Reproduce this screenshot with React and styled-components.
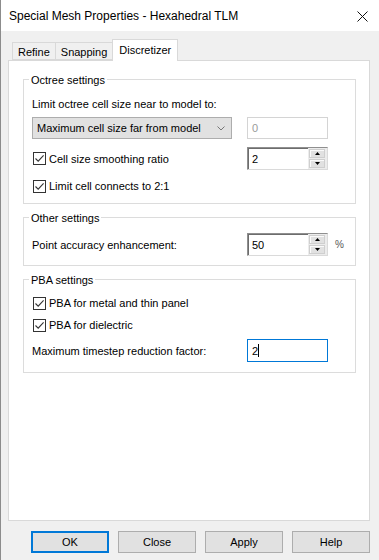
import React from 'react'
import styled, { createGlobalStyle } from 'styled-components'

const Global = createGlobalStyle`
  html, body {
    margin: 0;
    padding: 0;
    background: #f0f0f0;
    overflow: hidden;
  }
  body {
    font-family: "Liberation Sans", Arial, sans-serif;
    font-size: 11px;
    color: #000;
  }
`

const Window = styled.div`
  width: 379px;
  height: 560px;
  box-sizing: border-box;
  border-left: 1px solid #8c8c8c;
  background: #f0f0f0;
  display: flex;
  flex-direction: column;
`

const TitleBar = styled.div`
  height: 31px;
  background: #fff;
  display: flex;
  align-items: center;
  justify-content: space-between;
  padding: 0 11px 0 8px;
`

const Title = styled.div`
  font-size: 12px;
  line-height: 14px;
  margin-top: 1px;
`

const CloseBox = styled.div`
  width: 11px;
  height: 11px;
  display: flex;
  margin-top: 2px;
`

const Body = styled.div`
  flex: 1;
  display: flex;
  flex-direction: column;
  padding: 8px 9px 0 7px;
`

const TabStrip = styled.div`
  height: 21px;
  display: flex;
  align-items: flex-end;
  padding-left: 4px;
  position: relative;
  z-index: 1;
`

const Tab = styled.div`
  box-sizing: border-box;
  height: ${p => (p.$active ? '22px' : '18px')};
  margin-bottom: ${p => (p.$active ? '-1px' : '0')};
  padding: ${p => (p.$active ? '3px 6px 0' : '2px 5px 0')};
  border: 1px solid #d9d9d9;
  border-bottom: ${p => (p.$active ? 'none' : '1px solid #d9d9d9')};
  margin-left: ${p => (p.$first ? '0' : '-1px')};
  background: ${p => (p.$active ? '#fff' : '#f0f0f0')};
  line-height: 14px;
`

const Panel = styled.div`
  box-sizing: border-box;
  height: 461px;
  background: #fff;
  border: 1px solid #d9d9d9;
  padding: 10px 13px 0 14px;
  display: flex;
  flex-direction: column;
  gap: 5px;
`

const Group = styled.fieldset`
  margin: 0;
  padding: ${p => p.$pad};
  border: 1px solid #dcdcdc;
  display: flex;
  flex-direction: column;
  min-width: 0;
`

const Legend = styled.legend`
  padding: 2px 2px 0;
  margin-left: -3px;
  line-height: 14px;
  font-size: 11px;
`

const Text = styled.div`
  line-height: 14px;
  height: 14px;
  margin-top: ${p => p.$mt || 0}px;
`

const Row = styled.div`
  display: flex;
  align-items: center;
  height: ${p => p.$h || 16}px;
  margin-top: ${p => p.$mt || 0}px;
`

const LabelCol = styled.div`
  width: 215px;
  display: flex;
  align-items: center;
`

const Combo = styled.div`
  box-sizing: border-box;
  width: 200px;
  height: 22px;
  background: #e1e1e1;
  border: 1px solid #adadad;
  display: flex;
  align-items: center;
  justify-content: space-between;
  padding: 0 6px 0 4px;
`

const TextBox = styled.div`
  box-sizing: border-box;
  width: 81px;
  height: ${p => p.$h || 23}px;
  background: #fff;
  border: 1px solid ${p => p.$border || '#7a7a7a'};
  display: flex;
  align-items: center;
  padding-left: 4px;
  color: ${p => (p.$disabled ? '#9a9a9a' : '#000')};
`

const Caret = styled.span`
  display: inline-block;
  width: 1px;
  height: 13px;
  background: #000;
`

const Spin = styled.div`
  box-sizing: border-box;
  width: 81px;
  height: 23px;
  background: #fff;
  border: 1px solid;
  border-color: #8f8f8f #dadada #dadada #8f8f8f;
  box-shadow: inset 1px 1px 0 #6d6d6d;
  display: flex;
  align-items: stretch;
`

const SpinValue = styled.div`
  flex: 1;
  display: flex;
  align-items: center;
  padding-left: 4px;
`

const SpinButtons = styled.div`
  width: 19px;
  background: #ececec;
  display: flex;
  flex-direction: column;
  justify-content: center;
  gap: 1px;
  padding: 1px 2px 1px 1px;
  box-sizing: border-box;
`

const SpinBtn = styled.div`
  flex: 1;
  background: #e1e1e1;
  border: 1px solid #cfcfcf;
  box-shadow: inset 1px 1px 0 #fafafa;
  display: flex;
  align-items: center;
  justify-content: center;
`

const Unit = styled.span`
  margin-left: 7px;
  color: #555;
  font-size: 10px;
`

const Check = styled.span`
  box-sizing: border-box;
  width: 13px;
  height: 13px;
  margin-left: 1px;
  margin-right: 3px;
  border: 1px solid #333;
  background: #fff;
  display: flex;
  align-items: center;
  justify-content: center;
`

const ButtonRow = styled.div`
  display: flex;
  justify-content: flex-end;
  gap: 9px;
  margin-top: 10px;
`

const Button = styled.button`
  box-sizing: border-box;
  width: 78px;
  height: 22px;
  background: #e1e1e1;
  border: ${p => (p.$default ? '2px solid #0078d7' : '1px solid #adadad')};
  font-family: "Liberation Sans", Arial, sans-serif;
  font-size: 11px;
  color: #000;
  padding: 0;
  margin: 0;
`

const Tick = () => (
  <svg width="11" height="11" viewBox="0 0 11 11">
    <path d="M1.5 5.5 L4.2 8.2 L9.6 2.4" fill="none" stroke="#333" strokeWidth="1.1" />
  </svg>
)

const Arrow = ({ down }) => (
  <svg width="5" height="3" viewBox="0 0 5 3">
    <path d={down ? 'M0 0 H5 L2.5 3 Z' : 'M0 3 H5 L2.5 0 Z'} fill="#000" />
  </svg>
)

const CheckField = ({ children }) => (
  <>
    <Check><Tick /></Check>
    <span>{children}</span>
  </>
)

const SpinBox = ({ value }) => (
  <Spin>
    <SpinValue>{value}</SpinValue>
    <SpinButtons>
      <SpinBtn><Arrow /></SpinBtn>
      <SpinBtn><Arrow down /></SpinBtn>
    </SpinButtons>
  </Spin>
)

export default function App() {
  return (
    <Window>
      <Global />
      <TitleBar>
        <Title>Special Mesh Properties - Hexahedral TLM</Title>
        <CloseBox>
          <svg width="11" height="11" viewBox="0 0 11 11">
            <path d="M0.5 0.5 L10.5 10.5 M10.5 0.5 L0.5 10.5" stroke="#111" strokeWidth="1" />
          </svg>
        </CloseBox>
      </TitleBar>
      <Body>
        <TabStrip>
          <Tab $first>Refine</Tab>
          <Tab>Snapping</Tab>
          <Tab $active>Discretizer</Tab>
        </TabStrip>
        <Panel>
          <Group $pad="0 8px 9px 8px">
            <Legend>Octree settings</Legend>
            <Text $mt={10}>Limit octree cell size near to model to:</Text>
            <Row $h={22} $mt={6}>
              <LabelCol>
                <Combo>
                  <span>Maximum cell size far from model</span>
                  <svg width="8" height="5" viewBox="0 0 8 5">
                    <path d="M0.5 0.5 L4 4 L7.5 0.5" fill="none" stroke="#777" strokeWidth="1" />
                  </svg>
                </Combo>
              </LabelCol>
              <TextBox $h={22} $border="#d4d4d4" $disabled>0</TextBox>
            </Row>
            <Row $h={23} $mt={8}>
              <LabelCol><CheckField>Cell size smoothing ratio</CheckField></LabelCol>
              <SpinBox value="2" />
            </Row>
            <Row $mt={8}>
              <CheckField>Limit cell connects to 2:1</CheckField>
            </Row>
          </Group>
          <Group $pad="0 8px 9px 8px">
            <Legend>Other settings</Legend>
            <Row $h={23} $mt={8}>
              <LabelCol>Point accuracy enhancement:</LabelCol>
              <SpinBox value="50" />
              <Unit>%</Unit>
            </Row>
          </Group>
          <Group $pad="0 8px 10px 8px">
            <Legend>PBA settings</Legend>
            <Row $mt={8}>
              <CheckField>PBA for metal and thin panel</CheckField>
            </Row>
            <Row $mt={6}>
              <CheckField>PBA for dielectric</CheckField>
            </Row>
            <Row $h={23} $mt={6}>
              <LabelCol>Maximum timestep reduction factor:</LabelCol>
              <TextBox $border="#0078d7">2<Caret /></TextBox>
            </Row>
          </Group>
        </Panel>
        <ButtonRow>
          <Button $default>OK</Button>
          <Button>Close</Button>
          <Button>Apply</Button>
          <Button>Help</Button>
        </ButtonRow>
      </Body>
    </Window>
  )
}
